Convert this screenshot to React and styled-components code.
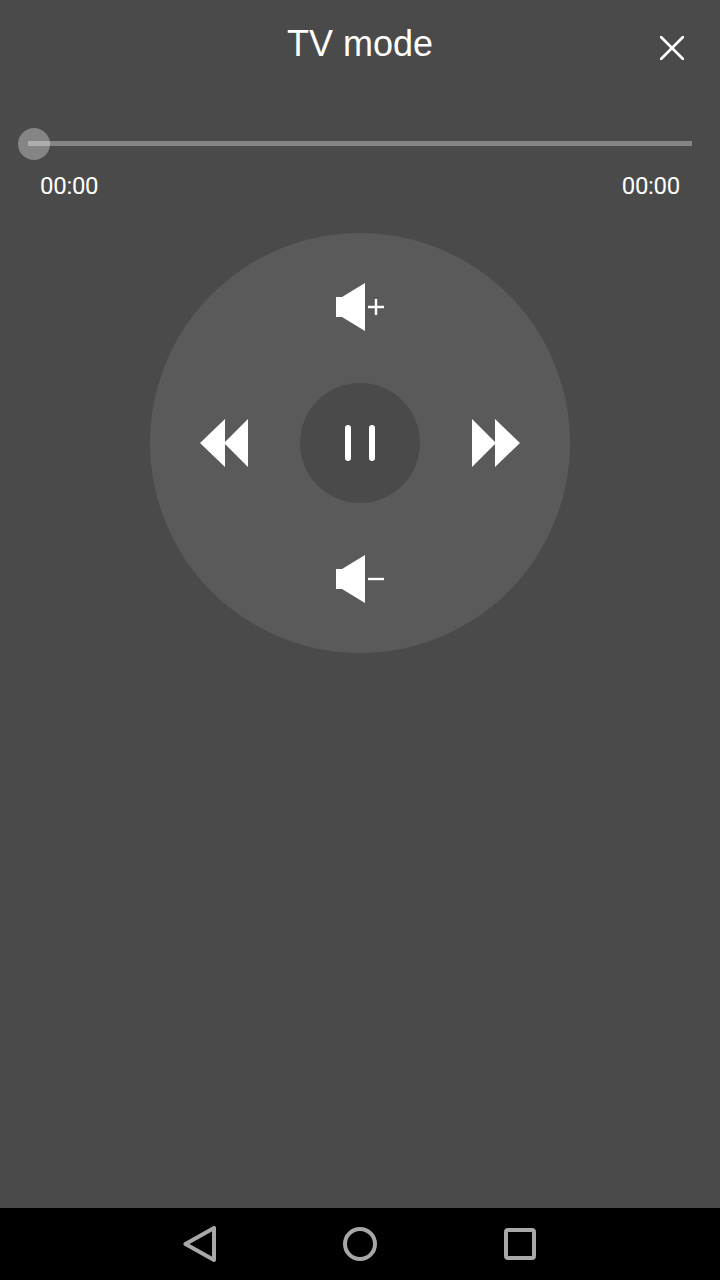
import React from 'react';
import styled, { createGlobalStyle } from 'styled-components';

const GlobalStyle = createGlobalStyle`
  html, body {
    margin: 0;
    padding: 0;
    background: #4a4a4a;
  }
  body {
    font-family: Roboto, "Liberation Sans", sans-serif;
  }
`;

const Screen = styled.div`
  display: flex;
  flex-direction: column;
  width: 720px;
  height: 1280px;
  overflow: hidden;
  background: #4a4a4a;
  color: #fff;
`;

const Main = styled.main`
  flex: 1;
  display: flex;
  flex-direction: column;
`;

const Header = styled.header`
  display: grid;
  grid-template-columns: 1fr auto 1fr;
  height: 128px;
`;

const Title = styled.h1`
  grid-column: 2;
  margin: 23px 0 0;
  font-family: "Liberation Sans", Arial, sans-serif;
  font-size: 36px;
  line-height: 42px;
  font-weight: 400;
`;

const CloseButton = styled.button`
  grid-column: 3;
  justify-self: end;
  align-self: start;
  width: 24px;
  height: 24px;
  margin: 36px 36px 0 0;
  padding: 0;
  border: 0;
  background: none;
  display: block;
`;

const Slider = styled.div`
  position: relative;
  height: 32px;
  margin: 0 28px;
  display: flex;
  align-items: flex-start;
`;

const Track = styled.div`
  width: 100%;
  height: 5px;
  margin-top: 13px;
  background: #858585;
`;

const Thumb = styled.div`
  position: absolute;
  left: -10px;
  top: 0;
  width: 32px;
  height: 32px;
  border-radius: 50%;
  background: rgba(255, 255, 255, 0.33);
`;

const Times = styled.div`
  display: flex;
  justify-content: space-between;
  padding: 0 40px;
  margin-top: 12px;
  font-size: 24px;
  line-height: 28px;
  letter-spacing: -0.3px;
`;

const Disc = styled.div`
  display: grid;
  grid-template-columns: 148px 124px 148px;
  grid-template-rows: 148px 124px 148px;
  align-self: center;
  width: 420px;
  height: 420px;
  margin-top: 33px;
  border-radius: 50%;
  background: #5a5a5a;
`;

const DiscButton = styled.button`
  grid-column: ${(p) => p.$col};
  grid-row: ${(p) => p.$row};
  display: flex;
  align-items: center;
  justify-content: center;
  padding: 0;
  border: 0;
  background: none;
`;

const PauseButton = styled(DiscButton)`
  place-self: center;
  width: 120px;
  height: 120px;
  gap: 18px;
  border-radius: 50%;
  background: #4a4a4a;
`;

const PauseBar = styled.span`
  width: 6px;
  height: 36px;
  border-radius: 3px;
  background: #fff;
`;

const NavBar = styled.nav`
  display: flex;
  align-items: center;
  justify-content: center;
  gap: 124px;
  height: 72px;
  background: #000;
`;

const NavSlot = styled.div`
  width: 36px;
  height: 36px;
`;

const Icon = styled.svg`
  display: block;
`;

function VolumeIcon({ minus }) {
  return (
    <Icon width="50" height="48" viewBox="0 0 50 48">
      <path d="M1 14H7L30 0V48L7 34H1Z" fill="#fff" />
      <path d={minus ? 'M33 24H49' : 'M33 24H49M41 16V32'} stroke="#fff" strokeWidth="2.4" fill="none" />
    </Icon>
  );
}

function SkipIcon({ back }) {
  return (
    <Icon width="48" height="48" viewBox="0 0 48 48">
      {back ? (
        <path d="M0 24L25 0V48ZM24 24L48 0V48Z" fill="#fff" />
      ) : (
        <path d="M0 0L24 24L0 48ZM23 0L48 24L23 48Z" fill="#fff" />
      )}
    </Icon>
  );
}

export default function App() {
  return (
    <Screen>
      <GlobalStyle />
      <Main>
        <Header>
          <Title>TV mode</Title>
          <CloseButton aria-label="Close">
            <Icon width="24" height="24" viewBox="0 0 24 24">
              <path d="M1 1L23 23M23 1L1 23" stroke="#fff" strokeWidth="2.6" strokeLinecap="round" />
            </Icon>
          </CloseButton>
        </Header>
        <Slider>
          <Track />
          <Thumb />
        </Slider>
        <Times>
          <span>00:00</span>
          <span>00:00</span>
        </Times>
        <Disc>
          <DiscButton $col={2} $row={1} aria-label="Volume up">
            <VolumeIcon />
          </DiscButton>
          <DiscButton $col={1} $row={2} aria-label="Rewind">
            <SkipIcon back />
          </DiscButton>
          <PauseButton $col={2} $row={2} aria-label="Pause">
            <PauseBar />
            <PauseBar />
          </PauseButton>
          <DiscButton $col={3} $row={2} aria-label="Forward">
            <SkipIcon />
          </DiscButton>
          <DiscButton $col={2} $row={3} aria-label="Volume down">
            <VolumeIcon minus />
          </DiscButton>
        </Disc>
      </Main>
      <NavBar>
        <NavSlot>
          <Icon width="36" height="36" viewBox="0 0 36 36">
            <path d="M3.5 18L32 2V34Z" fill="none" stroke="#a8a8a8" strokeWidth="4" strokeLinejoin="round" />
          </Icon>
        </NavSlot>
        <NavSlot>
          <Icon width="36" height="36" viewBox="0 0 36 36">
            <circle cx="18" cy="18" r="15" fill="none" stroke="#a8a8a8" strokeWidth="4" />
          </Icon>
        </NavSlot>
        <NavSlot>
          <Icon width="36" height="36" viewBox="0 0 36 36">
            <rect x="4" y="4" width="28" height="28" rx="2" fill="none" stroke="#a8a8a8" strokeWidth="4" />
          </Icon>
        </NavSlot>
      </NavBar>
    </Screen>
  );
}
